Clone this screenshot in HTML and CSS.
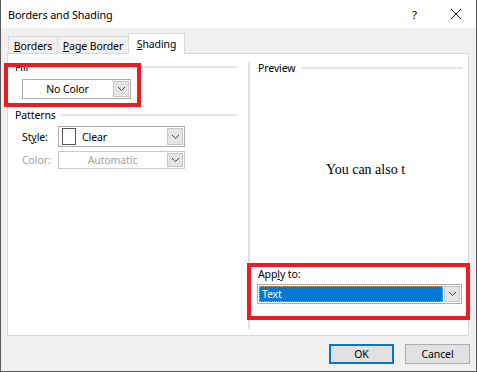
FILE: index.html
```html
<!DOCTYPE html>
<html>
<head>
<meta charset="utf-8">
<link rel="stylesheet" href="styles.css">
</head>
<body>
<div class="window">
  <div class="titlebar">
    <span class="title">Borders and Shading</span>
    <span class="help">?</span>
    <svg class="close" width="12" height="12" viewBox="0 0 12 12"><path d="M1 1 L11 11 M11 1 L1 11" stroke="#222" stroke-width="1" fill="none"/></svg>
  </div>
  <div class="content">
    <div class="tabs">
      <div class="tab t1"><u>B</u>orders</div>
      <div class="tab t2"><u>P</u>age Border</div>
      <div class="tab t3 active"><u>S</u>hading</div>
    </div>
    <div class="panel">
      <div class="left">
        <div class="ghead"><span>Fill</span><i></i></div>
        <div class="combo fill">
          <span class="ctext center">No Color</span>
          <span class="dd"><svg width="9" height="6" viewBox="0 0 9 6"><path d="M1 1 L4.5 4.5 L8 1" stroke="#444" fill="none"/></svg></span>
        </div>
        <div class="ghead patterns"><span>Patterns</span><i></i></div>
        <div class="row style-row">
          <span class="lbl">St<u>y</u>le:</span>
          <div class="combo wide tall">
            <span class="swatch"></span>
            <span class="ctext">Clear</span>
            <span class="dd"><svg width="9" height="6" viewBox="0 0 9 6"><path d="M1 1 L4.5 4.5 L8 1" stroke="#444" fill="none"/></svg></span>
          </div>
        </div>
        <div class="row color-row">
          <span class="lbl disabled">Color:</span>
          <div class="combo wide short disabled-combo">
            <span class="ctext center disabled">Automatic</span>
            <span class="dd"><svg width="9" height="6" viewBox="0 0 9 6"><path d="M1 1 L4.5 4.5 L8 1" stroke="#444" fill="none"/></svg></span>
          </div>
        </div>
      </div>
      <div class="right">
        <div class="ghead preview-head"><span>Preview</span><i></i></div>
        <div class="preview">You can also t</div>
        <div class="apply">
          <div class="apply-label">App<u>l</u>y to:</div>
          <div class="combo applycombo">
            <span class="sel"><span class="seltext">Text</span></span>
            <span class="dd"><svg width="9" height="6" viewBox="0 0 9 6"><path d="M1 1 L4.5 4.5 L8 1" stroke="#444" fill="none"/></svg></span>
          </div>
        </div>
      </div>
    </div>
    <div class="buttons">
      <div class="btn ok">OK</div>
      <div class="btn">Cancel</div>
    </div>
  </div>
  <div class="mark mark-fill"></div>
  <div class="mark mark-apply"></div>
</div>
</body>
</html>
```
FILE: styles.css
```css
* { box-sizing: border-box; }
html, body { margin: 0; padding: 0; }
body {
  font-family: "Noto Sans", "Open Sans", sans-serif;
  font-size: 10.5px;
  letter-spacing: -0.1px;
  color: #000;
  background: #fff;
}
.window {
  position: relative;
  width: 477px;
  height: 372px;
  background: #f0f0f0;
  border-left: 1px solid #5a5a5a;
  border-right: 1px solid #5a5a5a;
  border-bottom: 1px solid #5a5a5a;
}
.titlebar {
  height: 28px;
  background: #fff;
  display: flex;
  align-items: center;
  padding-left: 7px;
}
.title { font-size: 10.8px; flex: 1; padding-top: 1px; }
.help { font-size: 11.5px; margin-right: 33px; }
.close { margin-right: 14px; }
.content { padding: 5px 0 0 6px; }
.tabs {
  display: flex;
  height: 20px;
  align-items: flex-end;
  padding-left: 1px;
  position: relative;
  z-index: 1;
}
.tab {
  height: 17px;
  border: 1px solid #d9d9d9;
  border-bottom: none;
  background: #f0f0f0;
  display: flex;
  align-items: center;
  justify-content: center;
  padding-top: 1px;
  margin-right: -1px;
}
.t1 { width: 50px; }
.t2 { width: 72px; }
.t3 { width: 57px; }
.tab.active {
  background: #fff;
  margin-bottom: -1px;
  height: 21px;
  padding-bottom: 2px;
}
.panel {
  width: 462px;
  height: 283px;
  background: #fff;
  border: 1px solid #d9d9d9;
  display: grid;
  grid-template-columns: 240px 1fr;
}
.left { padding: 6px 11px 0 7px; }
.ghead {
  display: flex;
  align-items: center;
  height: 14px;
}
.ghead span { margin-right: 5px; }
.ghead i { flex: 1; height: 2px; background: #e5e5e5; }
.combo {
  position: relative;
  display: flex;
  align-items: center;
  border: 1px solid #adadad;
  background: #fff;
}
.fill { width: 109px; height: 20px; margin: 5px 0 0 7px; }
.ctext { flex: 1; padding-left: 6px; }
.ctext.center { text-align: center; padding-left: 0; }
.dd {
  width: 16px;
  align-self: stretch;
  margin: 1px;
  background: #e5e5e5;
  border: 1px solid #c8c8c8;
  display: flex;
  align-items: center;
  justify-content: center;
}
.patterns { margin-top: 9px; }
.row { display: flex; align-items: center; margin-left: 7px; }
.style-row { margin-top: 4px; }
.color-row { margin-top: 4px; }
.lbl { width: 36px; }
.wide { width: 127px; }
.tall { height: 21px; }
.short { height: 18px; }
.swatch {
  width: 14px;
  height: 17px;
  border: 1px solid #555;
  margin-left: 3px;
}
.disabled { color: #a0a0a0; }
.disabled-combo { border-color: #cccccc; }
.right {
  margin: 8px 0 6px 0;
  border-left: 2px solid #e0e0e0;
  padding: 0 5px 0 8px;
  display: flex;
  flex-direction: column;
}
.preview-head { margin-top: -1px; }
.preview {
  flex: 1;
  display: flex;
  align-items: center;
  justify-content: center;
  font-family: "Liberation Serif", serif;
  font-size: 14px;
  letter-spacing: 0;
  padding: 0 0 2px 10px;
}
.apply { padding-bottom: 25px; }
.apply-label { height: 14px; line-height: 14px; margin-bottom: 3px; }
.applycombo { width: 205px; height: 20px; margin-left: -1px; }
.sel {
  flex: 1;
  align-self: stretch;
  margin: 1px 0 1px 1px;
  background: #0078d7;
  border: 1px dotted #e0a060;
  color: #fff;
  display: flex;
  align-items: center;
  padding-left: 2px;
}
.buttons {
  display: flex;
  justify-content: flex-end;
  gap: 11px;
  margin-top: 8px;
  padding-right: 6px;
}
.btn {
  width: 65px;
  height: 20px;
  background: #e1e1e1;
  border: 1px solid #adadad;
  display: flex;
  align-items: center;
  justify-content: center;
}
.btn.ok { border: 2px solid #0078d7; }
.mark {
  position: absolute;
  border: 4px solid #ed1c24;
}
.mark-fill { left: 3px; top: 63px; width: 137px; height: 44px; }
.mark-apply { left: 246px; top: 263px; width: 223px; height: 57px; }
```
